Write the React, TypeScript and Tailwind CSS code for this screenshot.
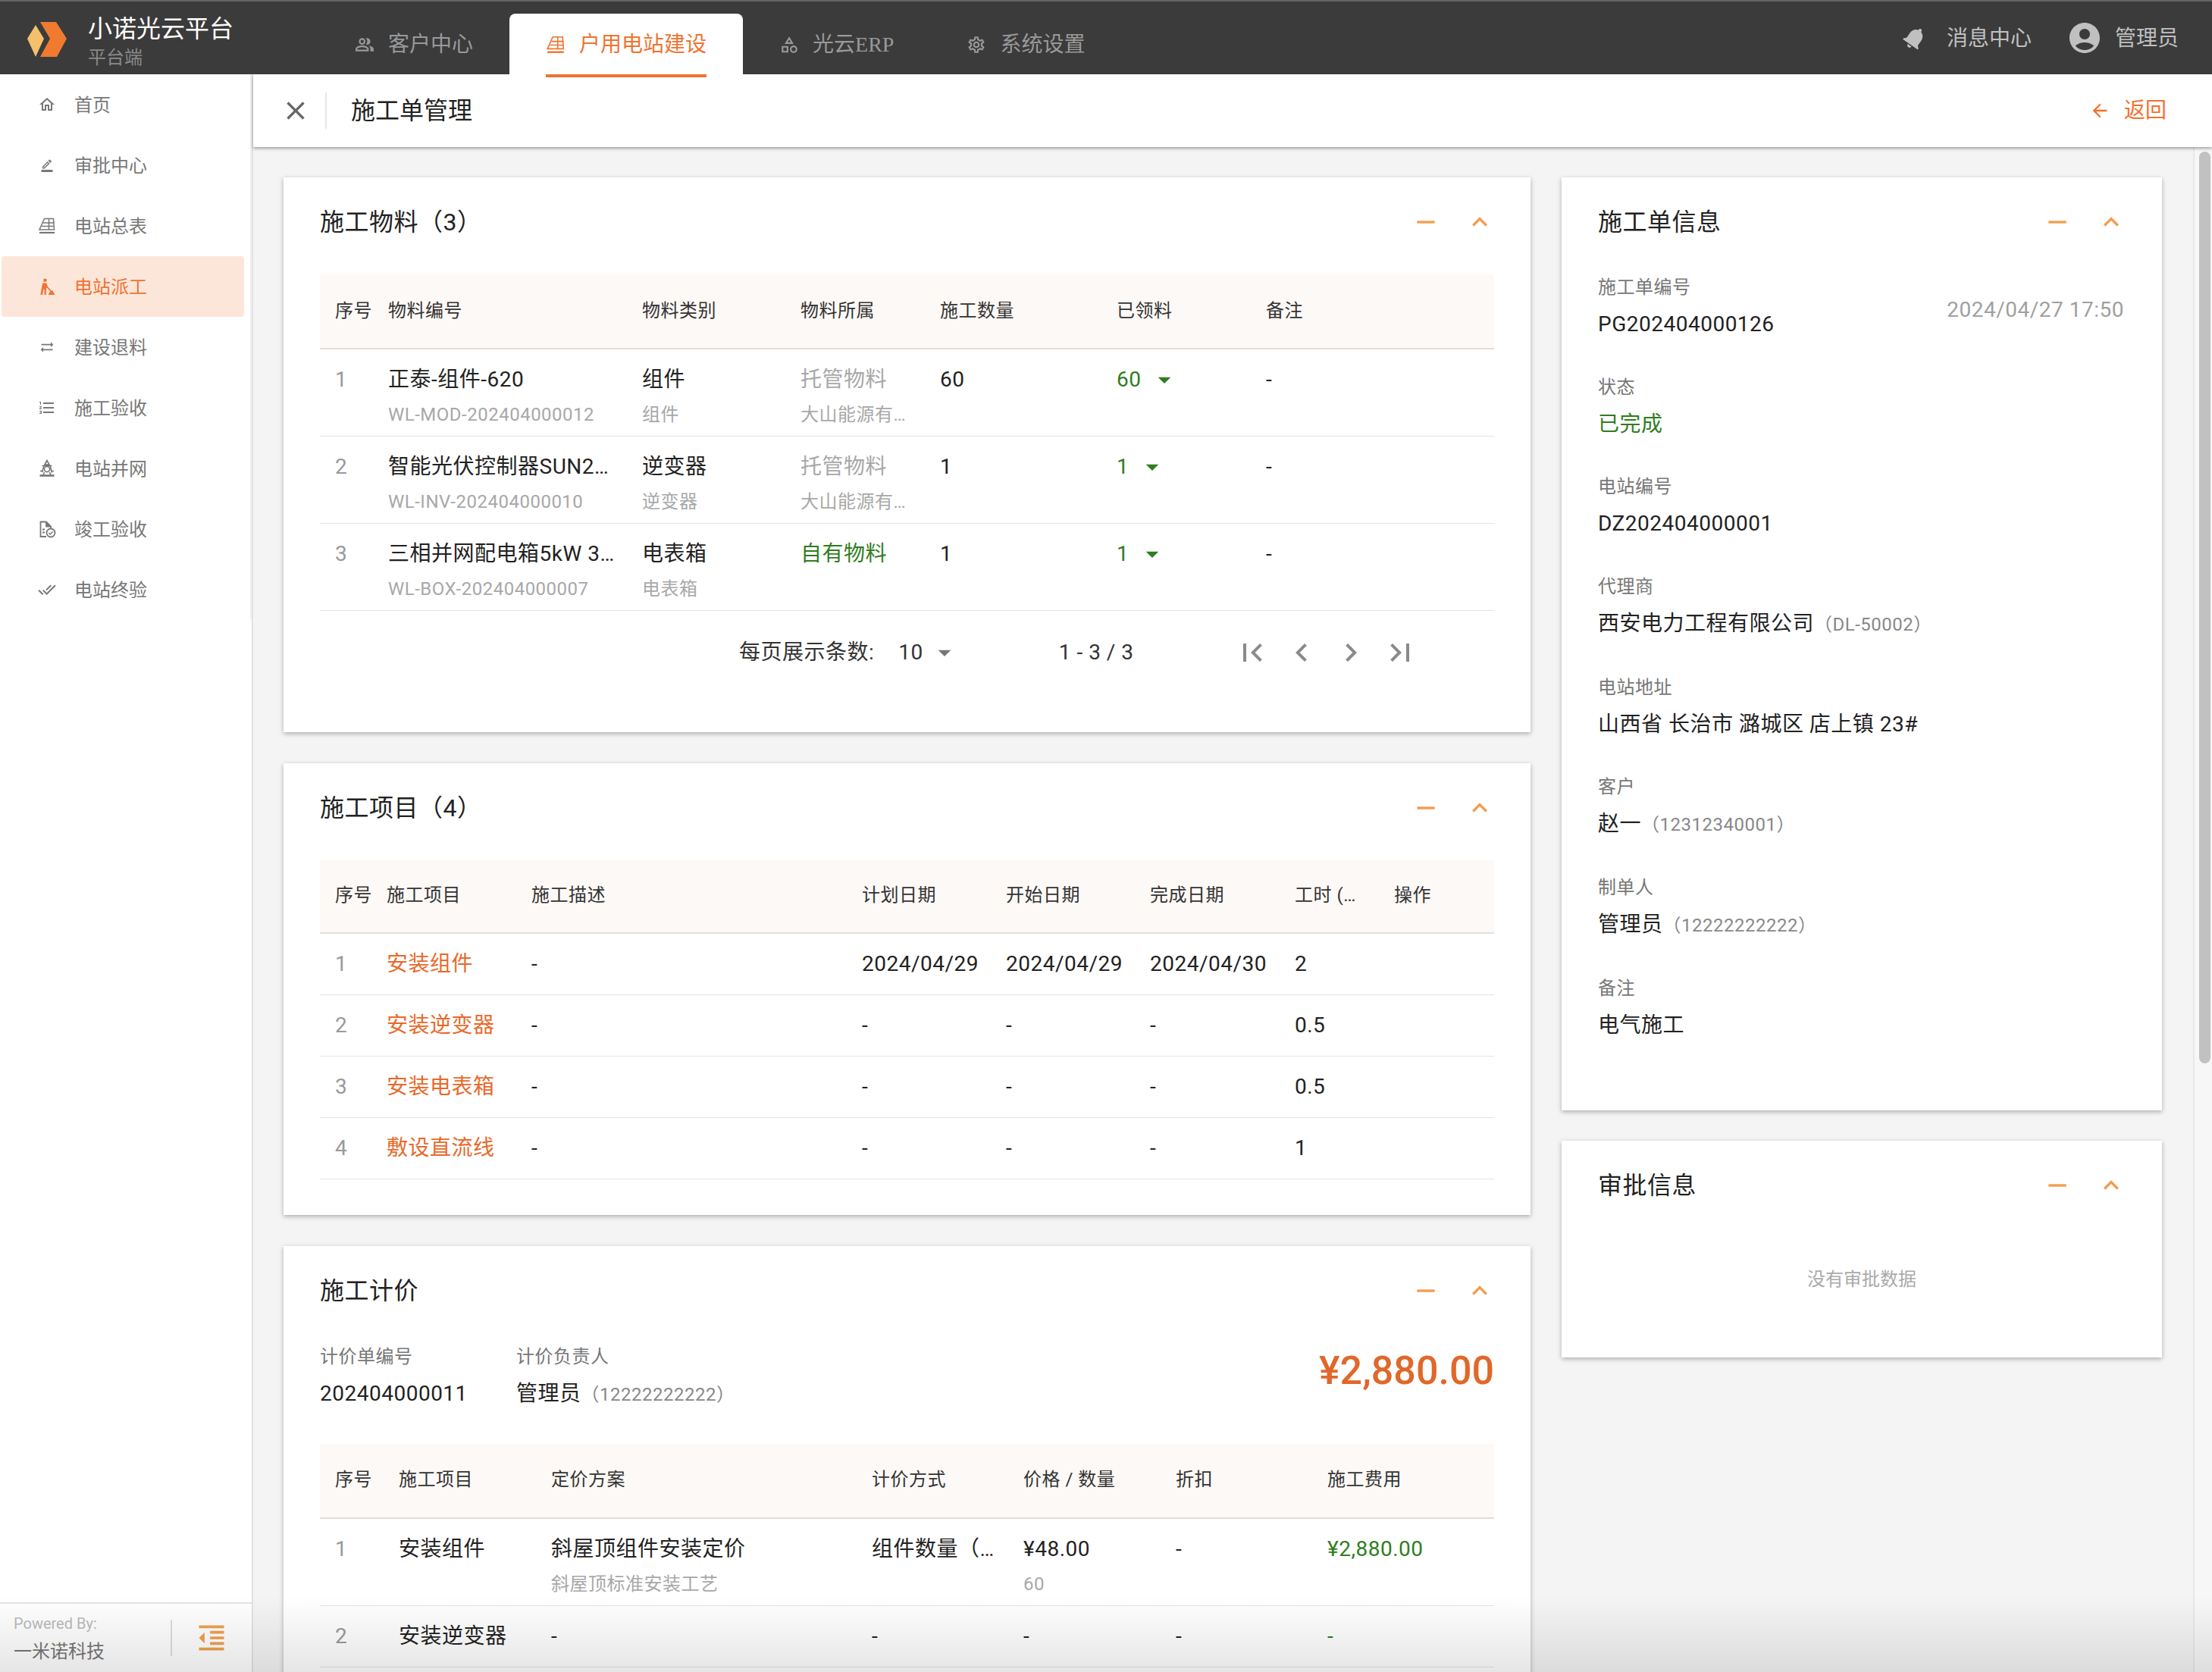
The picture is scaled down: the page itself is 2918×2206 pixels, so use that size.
import type { ReactNode } from "react";
import type { IconType } from "react-icons";
import {
  MdAccountCircle,
  MdArrowBack,
  MdArrowDropDown,
  MdChevronLeft,
  MdChevronRight,
  MdClose,
  MdDoneAll,
  MdExpandLess,
  MdFirstPage,
  MdFormatIndentDecrease,
  MdFormatListNumbered,
  MdLastPage,
  MdNotifications,
  MdOutlineBorderColor,
  MdOutlineCategory,
  MdOutlineHome,
  MdOutlinePeopleAlt,
  MdOutlineSettings,
  MdRemove,
  MdSyncAlt,
} from "react-icons/md";

type SizedIcon = (props: { size?: number }) => ReactNode;

function PanelIcon({ size = 24 }: { size?: number }) {
  return (
    <svg width={size} height={size} viewBox="0 0 24 24" fill="none" stroke="currentColor" strokeWidth="1.5">
      <path d="M8.500 2.500h12l1 14.500H2z" />
      <path d="M7 8h14.500M5 12.500h16.500M14.500 2.500v14.500" />
      <path d="M2 21h20" strokeWidth="2.200" />
    </svg>
  );
}

function WorkerIcon({ size = 24 }: { size?: number }) {
  return (
    <svg width={size} height={size} viewBox="0 0 24 24" fill="currentColor">
      <circle cx="9.500" cy="3.800" r="2.300" />
      <path d="M6.500 7.500h5l1.200 4.200 4.600 5.600-1.200 1-4.600-5-.6 2.200V23H8.600v-6.500L7.600 15 6 23H3.400L5.400 11z" />
      <path d="M13.500 23l3.200-5.500 2.400-.5 3.400 6z" />
    </svg>
  );
}

function TowerIcon({ size = 24 }: { size?: number }) {
  return (
    <svg width={size} height={size} viewBox="0 0 24 24" fill="none" stroke="currentColor" strokeWidth="1.600">
      <path d="M12 1.500L9 7h6zM5.500 8.500h13M8 8.500L5.500 17M16 8.500l2.500 9M3 15.500h4M17 15.500h4" />
      <circle cx="12" cy="13" r="3.600" />
      <path d="M2.500 21.500h19" strokeWidth="2.600" />
      <path d="M8.500 17l-1.500 4M15.500 17l1.500 4" />
    </svg>
  );
}

function DocCheckIcon({ size = 24 }: { size?: number }) {
  return (
    <svg width={size} height={size} viewBox="0 0 24 24" fill="none" stroke="currentColor" strokeWidth="1.800">
      <path d="M11 22H3.500V2.500H11l6 6v2.500" />
      <path d="M11 2.500v6h6" fill="currentColor" />
      <path d="M6 12.500h3M6 16.500h3" />
      <circle cx="17" cy="17" r="5.500" />
      <path d="M14.300 17l2 2 3.500-3.800" strokeWidth="1.500" />
    </svg>
  );
}

const menu: { label: string; icon: IconType | SizedIcon; size?: number; active?: boolean }[] = [
  { label: "首页", icon: MdOutlineHome },
  { label: "审批中心", icon: MdOutlineBorderColor, size: 18 },
  { label: "电站总表", icon: PanelIcon },
  { label: "电站派工", icon: WorkerIcon },
  { label: "建设退料", icon: MdSyncAlt, size: 20 },
  { label: "施工验收", icon: MdFormatListNumbered },
  { label: "电站并网", icon: TowerIcon },
  { label: "竣工验收", icon: DocCheckIcon },
  { label: "电站终验", icon: MdDoneAll },
];

function Sidebar() {
  return (
    <aside className="w-[334px] shrink-0 flex flex-col bg-white border-r-2 border-[#e2e2e2]">
      <nav className="h-[719px] border-r-2 border-[#f0f0f0]">
        {menu.map((m) => (
          <div
            key={m.label}
            className={
              m.label === "电站派工"
                ? "ml-[2px] w-[320px] h-[80px] pl-[48px] flex items-center gap-6 rounded bg-[#fce6da] text-[#f07330]"
                : "ml-[2px] w-[320px] h-[80px] pl-[48px] flex items-center gap-6 text-[#777777]"
            }
          >
            <span className="w-6 flex justify-center">
              <m.icon size={m.size ?? 24} />
            </span>
            <span className="pt-[1px] text-[24px]">{m.label}</span>
          </div>
        ))}
      </nav>
      <div className="mt-auto h-[92px] border-t-2 border-[#e4e4e4] pl-[18px] flex items-center">
        <div className="w-[207px] pt-[4px]">
          <p className="text-[20px] leading-[26px] text-[#bbbbbb]">Powered By:</p>
          <p className="mt-[6px] text-[24px] leading-[36px] text-[#777777]">一米诺科技</p>
        </div>
        <div className="w-[2px] h-[48px] bg-[#dddddd]" />
        <MdFormatIndentDecrease size={44} className="ml-[30px] text-[#f0a04e]" />
      </div>
    </aside>
  );
}

function Tab({ icon: Icon, label, active }: { icon: IconType | SizedIcon; label: string; active?: boolean }) {
  if (active) {
    return (
      <div className="relative h-[80px] px-12 pt-[1px] flex items-center gap-[18px] rounded-t-lg bg-white text-[#f07330]">
        <Icon size={26} />
        <span className="text-[28px]">{label}</span>
        <div className="absolute left-12 right-12 -bottom-[4px] h-[4px] bg-[#f07330] z-20" />
      </div>
    );
  }
  return (
    <div className="h-[80px] px-12 pt-[1px] flex items-center gap-[18px] text-[#999999]">
      <Icon size={26} />
      <span className="text-[28px]">{label}</span>
    </div>
  );
}

function TopBar() {
  return (
    <header className="h-[98px] shrink-0 flex bg-[#3b3b3b] border-t-2 border-[#666666] relative z-20">
      <div className="w-[420px] pl-[36px] flex items-center gap-7">
        <svg width="52" height="46" viewBox="0 0 52 46" className="mt-[4px]">
          <polygon points="0,22 11,4 22,22 11,46" fill="#f5c06c" />
          <polygon points="17,0 38,0 52,22 39,46 17,46 30,22" fill="#f07a30" />
        </svg>
        <div className="mt-[12px]">
          <p className="text-[32px] leading-[40px] text-white">小诺光云平台</p>
          <p className="text-[24px] leading-[36px] text-[#8a8a8a]">平台端</p>
        </div>
      </div>
      <div className="self-end flex font-[family-name:'Liberation_Serif','Noto_Sans_CJK_SC',serif]">
        <Tab icon={MdOutlinePeopleAlt} label="客户中心" />
        <Tab icon={PanelIcon} label="户用电站建设" active />
        <Tab icon={MdOutlineCategory} label="光云ERP" />
        <Tab icon={MdOutlineSettings} label="系统设置" />
      </div>
      <div className="ml-auto pr-[44px] flex items-center text-[#c0c0c0] text-[28px] font-[family-name:'Liberation_Serif','Noto_Sans_CJK_SC',serif]">
        <MdNotifications size={36} className="rotate-[35deg]" />
        <span className="ml-[24px] pt-[2px]">消息中心</span>
        <MdAccountCircle size={48} className="ml-[46px]" />
        <span className="ml-[16px] pt-[2px]">管理员</span>
      </div>
    </header>
  );
}

function Card({ title, children, className }: { title: string; children: ReactNode; className: string }) {
  return (
    <section className={className}>
      <div className="h-[118px] flex items-center justify-between">
        <h2 className="text-[32px] text-[#222222]">{title}</h2>
        <div className="flex items-center gap-[31px] mr-[-1px] text-[#f39c4c]">
          <MdRemove size={40} />
          <MdExpandLess size={40} />
        </div>
      </div>
      {children}
    </section>
  );
}

function HeadCells({ cols }: { cols: string[] }) {
  return (
    <>
      {cols.map((c, i) => (
        <div key={c} className={i === 0 ? "pl-5 text-[24px] text-[#333333]" : "text-[24px] text-[#333333]"}>
          {c}
        </div>
      ))}
    </>
  );
}

function Cell({ main, sub, mainClass = "text-[#222222]" }: { main: ReactNode; sub?: string; mainClass?: string }) {
  return (
    <div className="min-w-0 pt-5">
      <div className={"text-[28px] leading-[40px] whitespace-nowrap " + mainClass}>{main}</div>
      {sub && <div className="mt-[10px] text-[24px] leading-[32px] text-[#a8a8a8] whitespace-nowrap">{sub}</div>}
    </div>
  );
}

function Index({ n }: { n: number }) {
  return <div className="pl-5 pt-5 text-[28px] leading-[40px] text-[#999999]">{n}</div>;
}

const GREEN = "text-[#2f7d1e]";

function Received({ n }: { n: string }) {
  return (
    <div className={"pt-5 flex items-center h-[60px] text-[28px] " + GREEN}>
      <span>{n}</span>
      <MdArrowDropDown size={40} className="ml-[11px]" />
    </div>
  );
}

const materials = [
  { name: "正泰-组件-620", code: "WL-MOD-202404000012", kind: "组件", own: "托管物料", owner: "大山能源有…", self: false, qty: "60" },
  { name: "智能光伏控制器SUN2…", code: "WL-INV-202404000010", kind: "逆变器", own: "托管物料", owner: "大山能源有…", self: false, qty: "1" },
  { name: "三相并网配电箱5kW 3…", code: "WL-BOX-202404000007", kind: "电表箱", own: "自有物料", owner: "", self: true, qty: "1" },
];

function MaterialCard() {
  return (
    <Card title="施工物料（3）" className="bg-white shadow-[0_2px_6px_rgba(0,0,0,0.3)] px-12">
      <div className="mt-[10px] h-[99px] pb-[2px] items-center grid grid-cols-[90px_335px_209px_184px_233px_197px_1fr] bg-[#fdf9f6] border-b-2 border-[#e2dedb]">
        <HeadCells cols={["序号", "物料编号", "物料类别", "物料所属", "施工数量", "已领料", "备注"]} />
      </div>
      {materials.map((m, i) => (
        <div key={m.code} className="h-[115px] grid grid-cols-[90px_335px_209px_184px_233px_197px_1fr] border-b border-[#e4e4e4]">
          <Index n={i + 1} />
          <Cell main={m.name} sub={m.code} />
          <Cell main={m.kind} sub={m.kind} />
          <Cell main={m.own} sub={m.owner} mainClass={m.self ? GREEN : "text-[#a8a8a8]"} />
          <Cell main={m.qty} />
          <Received n={m.qty} />
          <Cell main="-" />
        </div>
      ))}
      <div className="h-[110px] mb-[50px] pl-[553px] flex items-center text-[28px] text-[#333333]">
        <span>每页展示条数:</span>
        <span className="ml-[32px]">10</span>
        <MdArrowDropDown size={40} className="ml-[8px] text-[#777777]" />
        <span className="ml-[131px]">1 - 3 / 3</span>
        <div className="ml-[132px] flex gap-[17px] text-[#8a8a8a]">
          <MdFirstPage size={48} />
          <MdChevronLeft size={48} />
          <MdChevronRight size={48} />
          <MdLastPage size={48} />
        </div>
      </div>
    </Card>
  );
}

const items = [
  { name: "安装组件", desc: "-", plan: "2024/04/29", start: "2024/04/29", end: "2024/04/30", hours: "2" },
  { name: "安装逆变器", desc: "-", plan: "-", start: "-", end: "-", hours: "0.5" },
  { name: "安装电表箱", desc: "-", plan: "-", start: "-", end: "-", hours: "0.5" },
  { name: "敷设直流线", desc: "-", plan: "-", start: "-", end: "-", hours: "1" },
];

function ProjectCard() {
  return (
    <Card title="施工项目（4）" className="bg-white shadow-[0_2px_6px_rgba(0,0,0,0.3)] px-12 pb-[47px]">
      <div className="mt-[10px] h-[97px] pb-[3px] items-center grid grid-cols-[88px_191px_436px_190px_190px_191px_131px_1fr] bg-[#fdf9f6] border-b-2 border-[#e2dedb]">
        <HeadCells cols={["序号", "施工项目", "施工描述", "计划日期", "开始日期", "完成日期", "工时 (…", "操作"]} />
      </div>
      {items.map((r, i) => (
        <div key={r.name} className="h-[81px] grid grid-cols-[88px_191px_436px_190px_190px_191px_131px_1fr] border-b border-[#e4e4e4]">
          <Index n={i + 1} />
          <Cell main={r.name} mainClass="text-[#e8692a]" />
          <Cell main={r.desc} />
          <Cell main={r.plan} />
          <Cell main={r.start} />
          <Cell main={r.end} />
          <Cell main={r.hours} />
          <div />
        </div>
      ))}
    </Card>
  );
}

function PriceCard() {
  return (
    <Card title="施工计价" className="bg-white shadow-[0_2px_6px_rgba(0,0,0,0.3)] px-12 pb-12">
      <div className="h-[143px] pt-[10px] flex">
        <div className="w-[259px]">
          <p className="text-[24px] leading-[36px] text-[#777777]">计价单编号</p>
          <p className="mt-[11px] text-[28px] leading-[40px] text-[#222222]">202404000011</p>
        </div>
        <div>
          <p className="text-[24px] leading-[36px] text-[#777777]">计价负责人</p>
          <p className="mt-[11px] text-[28px] leading-[40px] text-[#222222]">
            管理员<span className="text-[24px] text-[#888888]">（12222222222）</span>
          </p>
        </div>
        <p className="ml-auto text-[52px] font-medium tracking-normal leading-[74px] text-[#e0682a]">¥2,880.00</p>
      </div>
      <div className="h-[99px] pb-[3px] items-center grid grid-cols-[104px_201px_423px_200px_201px_200px_1fr] bg-[#fdf9f6] border-b-2 border-[#e2dedb]">
        <HeadCells cols={["序号", "施工项目", "定价方案", "计价方式", "价格 / 数量", "折扣", "施工费用"]} />
      </div>
      <div className="h-[115px] grid grid-cols-[104px_201px_423px_200px_201px_200px_1fr] border-b border-[#e4e4e4]">
        <Index n={1} />
        <Cell main="安装组件" />
        <Cell main="斜屋顶组件安装定价" sub="斜屋顶标准安装工艺" />
        <Cell main="组件数量（…" />
        <Cell main="¥48.00" sub="60" />
        <Cell main="-" />
        <Cell main="¥2,880.00" mainClass={GREEN} />
      </div>
      <div className="h-[81px] grid grid-cols-[104px_201px_423px_200px_201px_200px_1fr] border-b border-[#e4e4e4]">
        <Index n={2} />
        <Cell main="安装逆变器" />
        <Cell main="-" />
        <Cell main="-" />
        <Cell main="-" />
        <Cell main="-" />
        <Cell main="-" mainClass={GREEN} />
      </div>
    </Card>
  );
}

function Info({ label, children }: { label: string; children: ReactNode }) {
  return (
    <div>
      <p className="text-[24px] leading-[36px] text-[#777777]">{label}</p>
      <div className="mt-[11px] text-[28px] leading-[40px] text-[#222222]">{children}</div>
    </div>
  );
}

function Dim({ children }: { children: string }) {
  return <span className="text-[24px] text-[#888888]">{children}</span>;
}

function OrderCard() {
  return (
    <Card title="施工单信息" className="bg-white shadow-[0_2px_6px_rgba(0,0,0,0.3)] px-12 pb-[92px]">
      <div className="mt-[9px] flex flex-col gap-[44.7px]">
        <div className="flex justify-between">
          <Info label="施工单编号">PG202404000126</Info>
          <p className="mt-[28px] mr-[2px] text-[28px] leading-[40px] text-[#a0a0a0]">2024/04/27 17:50</p>
        </div>
        <Info label="状态">
          <span className={GREEN}>已完成</span>
        </Info>
        <Info label="电站编号">DZ202404000001</Info>
        <Info label="代理商">
          西安电力工程有限公司<Dim>（DL-50002）</Dim>
        </Info>
        <Info label="电站地址">山西省 长治市 潞城区 店上镇 23#</Info>
        <Info label="客户">
          赵一<Dim>（12312340001）</Dim>
        </Info>
        <Info label="制单人">
          管理员<Dim>（12222222222）</Dim>
        </Info>
        <Info label="备注">电气施工</Info>
      </div>
    </Card>
  );
}

function ApprovalCard() {
  return (
    <Card title="审批信息" className="bg-white shadow-[0_2px_6px_rgba(0,0,0,0.3)] px-12">
      <p className="pt-[47px] pb-[85px] text-center text-[24px] leading-[36px] tracking-normal text-[#aaaaaa]">没有审批数据</p>
    </Card>
  );
}

export default function App() {
  return (
    <div className="relative w-[2918px] h-[2206px] overflow-hidden flex flex-col bg-[#f4f4f4] font-[family-name:Roboto,'Noto_Sans_CJK_SC',sans-serif]">
      <TopBar />
      <div className="flex-1 min-h-0 flex">
        <Sidebar />
        <main className="flex-1 min-w-0 flex flex-col">
          <div className="relative z-10 h-[96px] shrink-0 bg-white flex items-center shadow-[0_2px_4px_rgba(0,0,0,0.35)]">
            <MdClose size={40} className="ml-[36px] text-[#666666]" />
            <div className="ml-[19px] w-[2px] h-[48px] bg-[#e6e6e6]" />
            <h1 className="ml-[32px] text-[32px] text-[#222222]">施工单管理</h1>
            <div className="ml-auto mr-[60px] flex items-center gap-[18px] text-[#f4702e]">
              <MdArrowBack size={28} />
              <span className="text-[28px]">返回</span>
            </div>
          </div>
          <div className="flex-1 min-h-0 flex overflow-hidden">
            <div className="flex-1 min-w-0 flex items-start gap-[41px] pl-[40px] pt-[40px] tracking-[0.5px]">
              <div className="w-[1645px] shrink-0 flex flex-col gap-[41px]">
                <MaterialCard />
                <ProjectCard />
                <PriceCard />
              </div>
              <div className="w-[792px] shrink-0 flex flex-col gap-[40px]">
                <OrderCard />
                <ApprovalCard />
              </div>
            </div>
            <div className="w-[25px] shrink-0 pt-[6px] pl-[6px] bg-[#f7f7f7] border-l-2 border-[#e8e8e8]">
              <div className="w-[15px] h-[1203px] rounded-full bg-[#c1c1c1]" />
            </div>
          </div>
        </main>
      </div>
      <div className="absolute left-0 right-0 bottom-0 h-[100px] pointer-events-none z-30 bg-gradient-to-b from-transparent to-black/10" />
    </div>
  );
}
